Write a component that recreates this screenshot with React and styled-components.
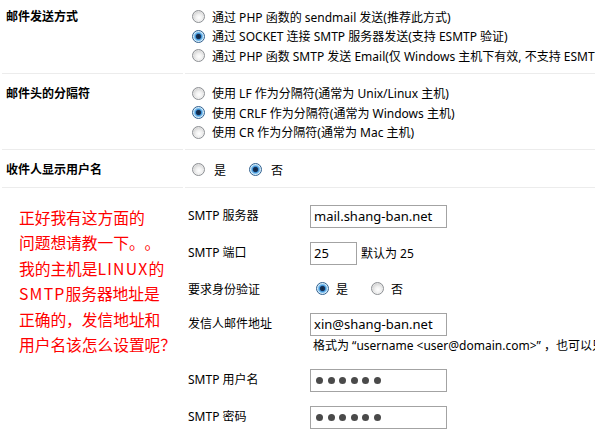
import styled, { createGlobalStyle } from 'styled-components';

const GlobalStyle = createGlobalStyle`
  html, body {
    margin: 0;
    padding: 0;
    background: #fff;
    overflow: hidden;
  }
  body {
    width: 595px;
    height: 442px;
    font-family: "Noto Sans", "Noto Sans CJK SC", sans-serif;
    font-size: 12px;
    color: #000;
  }
`;

const Table = styled.div`
  margin: -2px 0 0 2px;
  width: 640px;
  display: flex;
  flex-direction: column;
  gap: 1px;
`;

const Row = styled.div`
  display: grid;
  grid-template-columns: 181px 1fr;
  column-gap: 2px;
`;

const Cell = styled.div`
  border-bottom: 1px solid #ececec;
  padding: ${p => p.$pad || '9px 0 7px 3px'};
`;

const Label = styled.div`
  font-weight: bold;
  line-height: 19.5px;
  padding-left: 1px;
`;

const Options = styled.div`
  display: flex;
  flex-direction: ${p => (p.$inline ? 'row' : 'column')};
  align-items: ${p => (p.$inline ? 'center' : 'stretch')};
`;

const Option = styled.label`
  display: flex;
  align-items: center;
  height: ${p => p.$h || '19.5px'};
  white-space: nowrap;
  margin-right: ${p => (p.$inline ? '19px' : '0')};
`;

const Radio = styled.span`
  flex: none;
  box-sizing: border-box;
  width: 13px;
  height: 13px;
  border-radius: 50%;
  margin: 0 ${p => p.$mr || '7px'} 0 ${p => p.$ml || '4px'};
  border: 1px solid ${p => (p.$checked ? '#2f5f8e' : '#8d9094')};
  background: ${p =>
    p.$checked
      ? 'radial-gradient(circle at 50% 50%, #10243f 0, #17345a 2.2px, #3d8fd4 3px, #8cc8f1 4.2px, #d8eefb 5.5px)'
      : 'radial-gradient(circle at 55% 60%, #ffffff 0, #f1f1f1 3px, #d6d6d6 6px)'};
  box-shadow: inset 0 0 0 0.5px rgba(255, 255, 255, 0.6);
`;

const Note = styled.div`
  color: #f00;
  font-family: "Noto Sans CJK SC", sans-serif;
  font-size: 15.8px;
  line-height: 25.6px;
  letter-spacing: -0.1px;
  text-spacing-trim: space-all;
`;

const Latin = styled.span`
  letter-spacing: 1.2px;
`;

const Sub = styled.div`
  display: flex;
  flex-direction: column;
`;

const SubRow = styled.div`
  display: grid;
  grid-template-columns: 122px 1fr;
  align-items: start;
  padding: 7px 0;
`;

const SubLabel = styled.div`
  line-height: 19px;
  padding-top: 1px;
  white-space: nowrap;
`;

const Value = styled.div`
  display: flex;
  flex-direction: column;
  align-items: flex-start;
`;

const Inline = styled.div`
  display: flex;
  align-items: center;
  min-height: ${p => p.$h || '23px'};
  white-space: nowrap;
`;

const TextBox = styled.input`
  box-sizing: border-box;
  width: ${p => p.$w || '137px'};
  height: 23px;
  margin: 0;
  padding: 0 3px;
  border: 1px solid #a3a3a3;
  font-family: "Noto Sans", sans-serif;
  font-size: 13px;
  color: #000;
  background: #fff;
  outline: none;
`;

const PassBox = styled.div`
  box-sizing: border-box;
  width: 137px;
  height: 23px;
  border: 1px solid #a3a3a3;
  display: flex;
  align-items: center;
  gap: 4.6px;
  padding-left: 5px;
`;

const Dot = styled.span`
  width: 7px;
  height: 7px;
  border-radius: 50%;
  background: #4a4a4a;
`;

const After = styled.span`
  margin-left: 4px;
`;

const Hint = styled.div`
  line-height: 19px;
  padding-left: 3px;
  white-space: nowrap;
  text-spacing-trim: space-all;
`;

const Password = ({ n = 6 }) => (
  <PassBox>
    {Array.from({ length: n }, (_, i) => <Dot key={i} />)}
  </PassBox>
);

function App() {
  return (
    <>
      <GlobalStyle />
      <Table>
        <Row>
          <Cell><Label>邮件发送方式</Label></Cell>
          <Cell>
            <Options>
              <Option><Radio />通过 PHP 函数的 sendmail 发送(推荐此方式)</Option>
              <Option><Radio $checked />通过 SOCKET 连接 SMTP 服务器发送(支持 ESMTP 验证)</Option>
              <Option><Radio />通过 PHP 函数 SMTP 发送 Email(仅 Windows 主机下有效, 不支持 ESMTP 验证)</Option>
            </Options>
          </Cell>
        </Row>
        <Row>
          <Cell><Label>邮件头的分隔符</Label></Cell>
          <Cell>
            <Options>
              <Option><Radio />使用 LF 作为分隔符(通常为 Unix/Linux 主机)</Option>
              <Option><Radio $checked />使用 CRLF 作为分隔符(通常为 Windows 主机)</Option>
              <Option><Radio />使用 CR 作为分隔符(通常为 Mac 主机)</Option>
            </Options>
          </Cell>
        </Row>
        <Row>
          <Cell><Label>收件人显示用户名</Label></Cell>
          <Cell>
            <Options $inline>
              <Option $inline><Radio $mr="9px" />是</Option>
              <Option $inline><Radio $checked $mr="9px" />否</Option>
            </Options>
          </Cell>
        </Row>
        <Row>
          <Cell $pad="16px 0 6px 17px">
            <Note>
              正好我有这方面的<br />
              问题想请教一下。。<br />
              我的主机是<Latin>LINUX</Latin>的<br />
              <Latin>SMTP</Latin>服务器地址是<br />
              正确的，发信地址和<br />
              用户名该怎么设置呢？
            </Note>
          </Cell>
          <Cell $pad="9px 0 6px 3px">
            <Sub>
              <SubRow>
                <SubLabel>SMTP 服务器</SubLabel>
                <Value><TextBox defaultValue="mail.shang-ban.net" /></Value>
              </SubRow>
              <SubRow>
                <SubLabel>SMTP 端口</SubLabel>
                <Value>
                  <Inline>
                    <TextBox $w="47px" defaultValue="25" />
                    <After>默认为 25</After>
                  </Inline>
                </Value>
              </SubRow>
              <SubRow>
                <SubLabel>要求身份验证</SubLabel>
                <Value>
                  <Inline $h="20px">
                    <Option $inline $h="20px"><Radio $checked $ml="6px" />是</Option>
                    <Option $inline $h="20px"><Radio />否</Option>
                  </Inline>
                </Value>
              </SubRow>
              <SubRow>
                <SubLabel>发信人邮件地址</SubLabel>
                <Value>
                  <TextBox defaultValue="xin@shang-ban.net" />
                  <Hint>格式为 “username &lt;user@domain.com&gt;” ，也可以只填写邮件地址</Hint>
                </Value>
              </SubRow>
              <SubRow>
                <SubLabel>SMTP 用户名</SubLabel>
                <Value><Password /></Value>
              </SubRow>
              <SubRow>
                <SubLabel>SMTP 密码</SubLabel>
                <Value><Password /></Value>
              </SubRow>
            </Sub>
          </Cell>
        </Row>
      </Table>
    </>
  );
}

export default App;
